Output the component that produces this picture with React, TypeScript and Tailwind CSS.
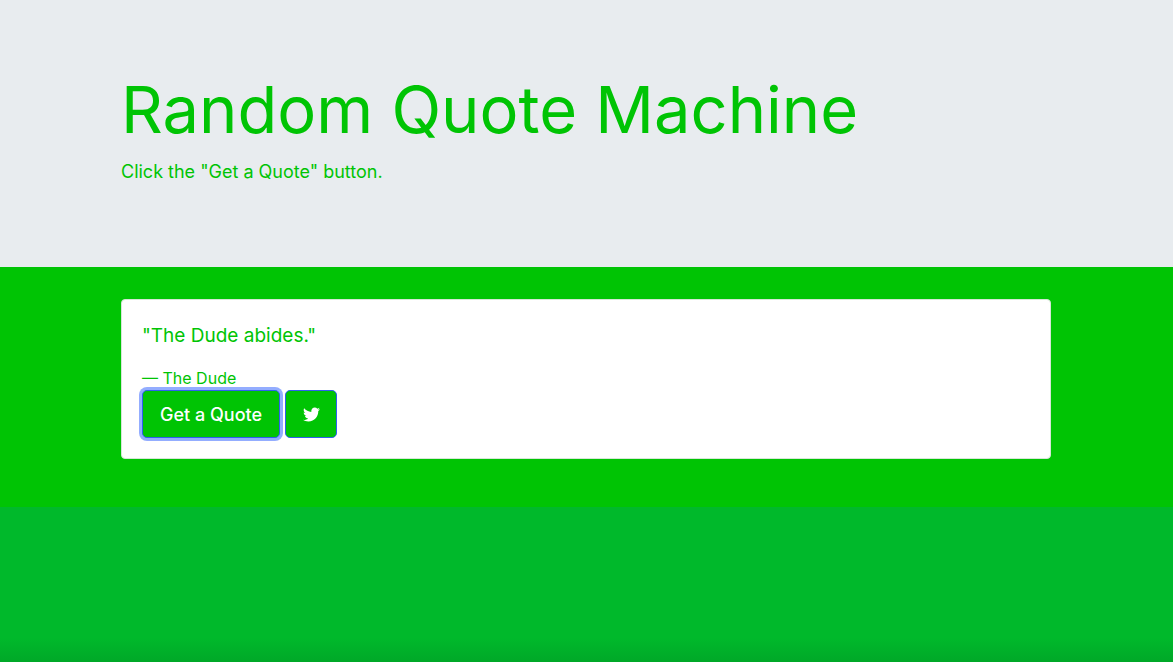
import { useState } from "react";
import { FaTwitter } from "react-icons/fa";

const quotes = [{ text: "The Dude abides.", author: "The Dude" }];

export default function App() {
  const [index, setIndex] = useState(0);
  const quote = quotes[index];

  return (
    <div className="flex min-h-screen flex-col bg-[#00b92b] font-['Inter',sans-serif] text-[#00c404]">
      <header className="bg-[#e8ecef] pt-[70px] pb-20">
        <div className="mx-auto max-w-[961px] pr-4 pl-[15px]">
          <h1 className="mb-1.5 text-[65px] leading-[80px] font-normal">Random Quote Machine</h1>
          <p className="text-[18px] leading-[31px] font-normal">Click the "Get a Quote" button.</p>
        </div>
      </header>
      <main className="bg-[#00c404] pt-8 pb-12">
        <div className="mx-auto max-w-[961px] pr-4 pl-[15px]">
          <section className="rounded border border-[#d6e6d7] bg-white p-5">
            <blockquote>
              <p className="mb-[15px] text-[19px] leading-[31px]">"{quote.text}"</p>
              <footer className="text-base leading-6">— {quote.author}</footer>
            </blockquote>
            <div className="flex gap-[5px]">
              <button
                type="button"
                onClick={() => setIndex((index + 1) % quotes.length)}
                className="h-12 rounded-[5px] border border-[#2f5ff0] bg-[#00c404] px-[17px] text-[18px] leading-[31px] font-medium text-white ring-3 ring-[#93adff] outline-none"
              >
                Get a Quote
              </button>
              <a
                href="https://twitter.com/intent/tweet"
                aria-label="Tweet this quote"
                className="flex h-12 w-[52px] items-center justify-center rounded-[5px] border border-[#2f5ff0] bg-[#00c404] text-white"
              >
                <FaTwitter size={17} />
              </a>
            </div>
          </section>
        </div>
      </main>
      <div className="mt-auto h-6 bg-linear-to-b from-[#00b92b] to-[#00a828]" />
    </div>
  );
}
